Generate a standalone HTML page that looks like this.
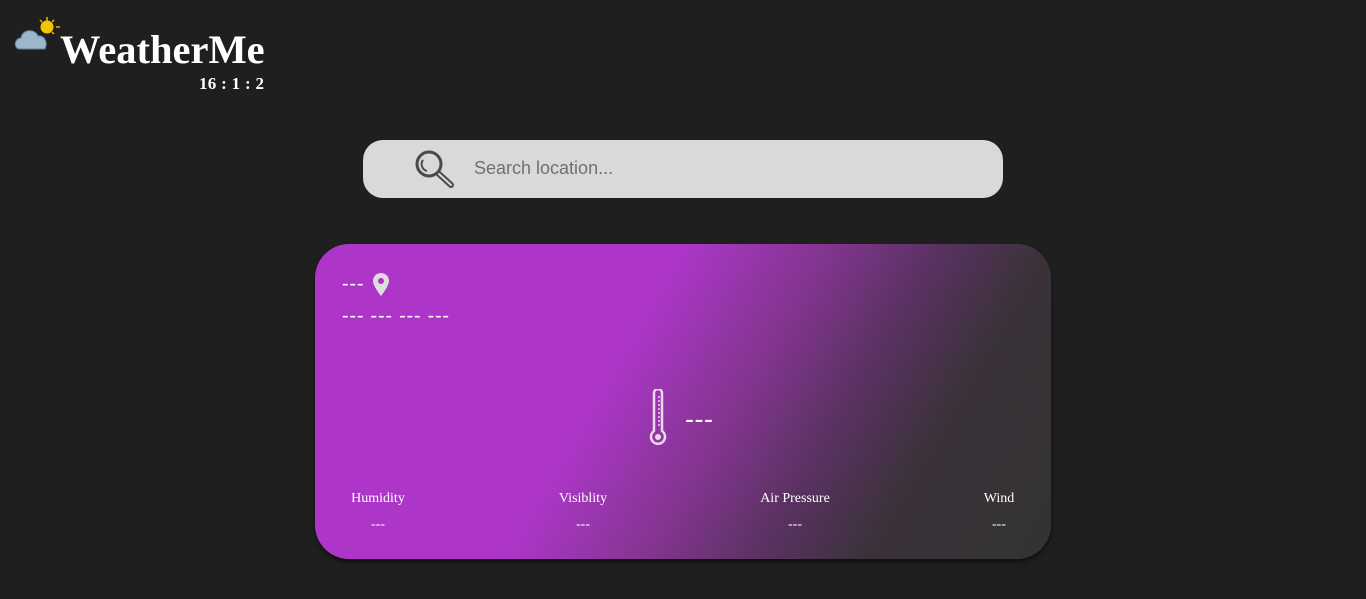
<!DOCTYPE html>
<html><head><style>
body{margin:0;background:#1f1f1f;width:1366px;height:599px;overflow:hidden;font-family:"Liberation Serif",serif;color:#fff;position:relative}
.logo{position:absolute;left:60px;top:27px;font-size:40.5px;font-weight:bold;line-height:46px}
.time{position:absolute;left:199px;top:74px;font-size:17px;font-weight:bold;letter-spacing:.3px}
.search{position:absolute;left:363px;top:140px;width:640px;height:58px;background:#d9d9d9;border-radius:20px}
.search span{position:absolute;left:111px;top:18px;font-family:"Liberation Sans",sans-serif;font-size:18px;color:#707070}
.card{position:absolute;left:315px;top:244px;width:736px;height:315px;border-radius:34px;background:linear-gradient(120deg,#ad36c9 0%,#ad36c9 40%,#83358f 56%,#5a3262 68%,#3a3239 80%,#333 100%);box-shadow:0 3px 4px rgba(0,0,0,.5)}
.t{position:absolute;font-family:"Liberation Sans",sans-serif;font-size:20px;letter-spacing:.75px}
.lab{position:absolute;top:247px;font-size:14px;text-align:center;width:120px}
.val{position:absolute;top:273px;font-size:14px;text-align:center;width:120px}
</style></head><body>
<svg style="position:absolute;left:14px;top:16px" width="48" height="36" viewBox="0 0 48 36">
<g stroke="#e6b800" stroke-width="1.5"><line x1="33" y1="1" x2="33" y2="5"/><line x1="42" y1="11" x2="46" y2="11"/><line x1="40" y1="4" x2="38" y2="6"/><line x1="40" y1="18" x2="38" y2="16"/><line x1="26" y1="4" x2="28" y2="6"/></g>
<circle cx="33" cy="11" r="6.5" fill="#f5c400"/>
<path d="M6 33 C-1 33 0 22 7 22 C8 13 21 12 24 20 C31 19 34 27 31 33 Z" fill="#9bb7cc" stroke="#5f7c92"/>
</svg>
<div class="logo">WeatherMe</div>
<div class="time">16 : 1 : 2</div>
<div class="search">
<svg style="position:absolute;left:50px;top:8px" width="44" height="42" viewBox="0 0 44 42"><circle cx="16" cy="16" r="12" fill="none" stroke="#4a4a4a" stroke-width="3"/><path d="M10 12 A7 7 0 0 0 14 23" fill="none" stroke="#4a4a4a" stroke-width="2"/><line x1="26" y1="26" x2="38" y2="37" stroke="#4a4a4a" stroke-width="6" stroke-linecap="round"/><line x1="26" y1="26" x2="38" y2="37" stroke="#d9d9d9" stroke-width="2" stroke-linecap="round"/></svg>
<span>Search location...</span></div>
<div class="card">
<div class="t" style="left:27px;top:29px">---</div>
<svg style="position:absolute;left:57px;top:29px" width="18" height="24" viewBox="0 0 18 24"><path d="M9 0C4 0 1 4 1 8c0 5 8 15 8 15s8-10 8-15C17 4 14 0 9 0z" fill="#ddd"/><circle cx="9" cy="8" r="3" fill="#ad36c9"/></svg>
<div class="t" style="left:27px;top:61px">--- --- --- ---</div>
<svg style="position:absolute;left:332px;top:145px" width="22" height="58" viewBox="0 0 22 58"><path d="M7 4a4 4 0 0 1 8 0v38a7 7 0 1 1-8 0z" fill="none" stroke="#e8d8e8" stroke-width="2.5"/><circle cx="11" cy="48" r="3" fill="#e8d8e8"/><g stroke="#e8d8e8" stroke-width="1.5"><line x1="11" y1="8" x2="13" y2="8"/><line x1="11" y1="12" x2="13" y2="12"/><line x1="11" y1="16" x2="13" y2="16"/><line x1="11" y1="20" x2="13" y2="20"/><line x1="11" y1="24" x2="13" y2="24"/><line x1="11" y1="28" x2="13" y2="28"/><line x1="11" y1="32" x2="13" y2="32"/><line x1="11" y1="36" x2="13" y2="36"/></g></svg>
<div class="t" style="left:370px;top:160px;font-size:27px;letter-spacing:.5px">---</div>
<div class="lab" style="left:3px">Humidity</div><div class="val" style="left:3px">---</div>
<div class="lab" style="left:208px">Visiblity</div><div class="val" style="left:208px">---</div>
<div class="lab" style="left:420px">Air Pressure</div><div class="val" style="left:420px">---</div>
<div class="lab" style="left:624px">Wind</div><div class="val" style="left:624px">---</div>
</div>
</body></html>
